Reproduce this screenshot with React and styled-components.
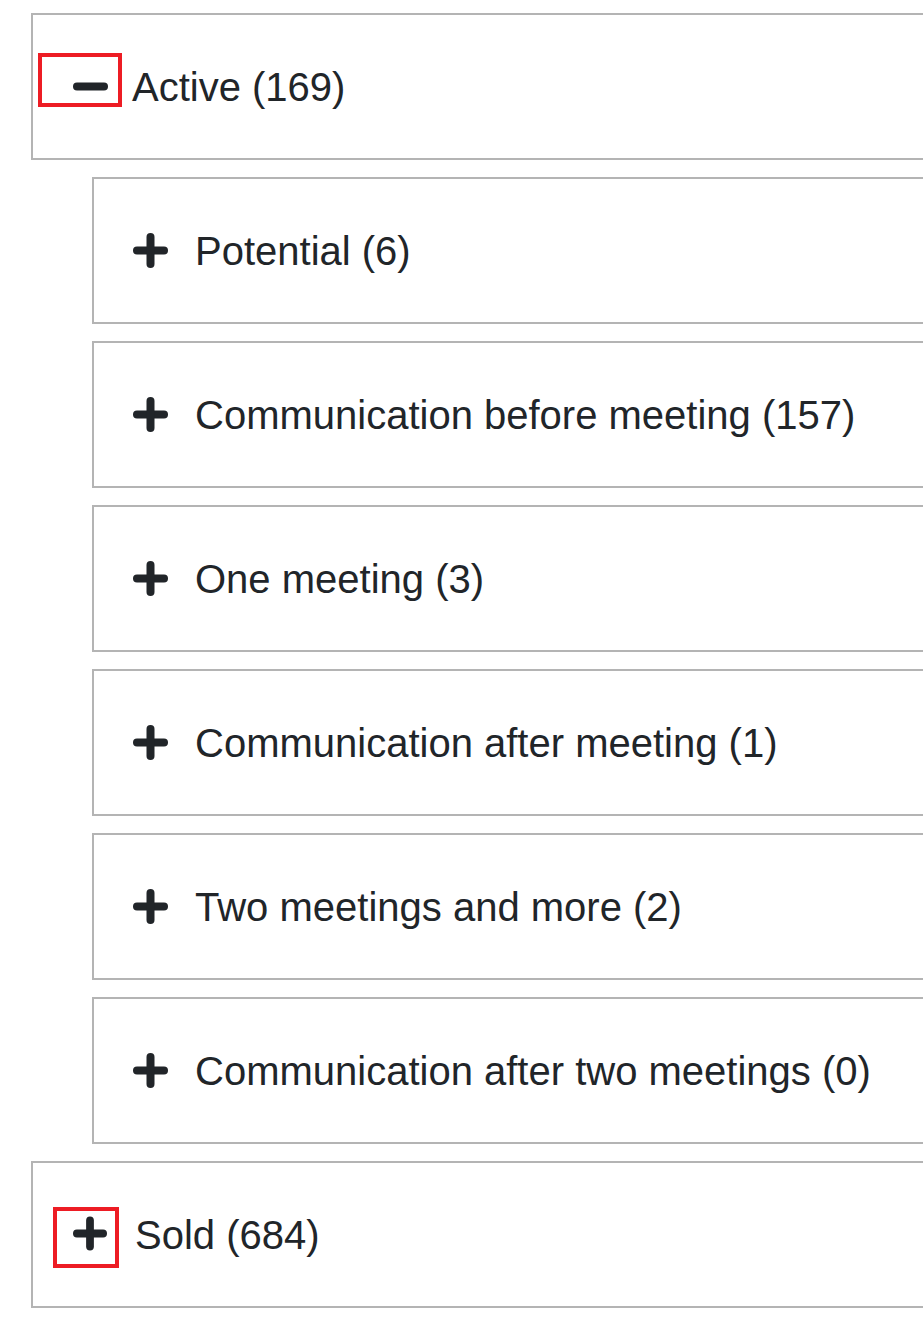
import React, { useState } from 'react';
import styled, { createGlobalStyle } from 'styled-components';

const GlobalStyle = createGlobalStyle`
  html, body {
    margin: 0;
    padding: 0;
    background: #ffffff;
    overflow: hidden;
    font-family: 'Liberation Sans', Arial, sans-serif;
    color: #212529;
  }
`;

const Page = styled.div`
  padding: 13px 0 0 31px;
  display: flex;
  flex-direction: column;
  gap: 17px;
  width: 1000px;
`;

const SubList = styled.div`
  display: flex;
  flex-direction: column;
  gap: 17px;
  margin-left: 61px;
`;

const Panel = styled.div`
  box-sizing: border-box;
  height: 147px;
  border: 2px solid #b4b4b4;
  background: #fff;
  display: flex;
  align-items: center;
  padding-left: ${p => p.$pad}px;
`;

const Toggle = styled.button`
  box-sizing: border-box;
  background: none;
  border: ${p => (p.$marked ? '4px solid #ed1c24' : 'none')};
  width: ${p => p.$w}px;
  height: ${p => p.$h}px;
  padding: ${p => p.$padding};
  margin: ${p => p.$margin || 0};
  display: flex;
  align-items: flex-start;
  justify-content: flex-start;
  cursor: pointer;
  flex-shrink: 0;
`;

const Label = styled.span`
  font-size: 40px;
  line-height: 1;
  margin-left: ${p => p.$ml}px;
  white-space: nowrap;
`;

const Icon = ({ open }) => (
  <svg width="35" height="35" viewBox="0 0 35 35" aria-hidden="true">
    <line x1="4" y1="17.5" x2="31" y2="17.5" stroke="#212529" strokeWidth="8" strokeLinecap="round" />
    {!open && (
      <line x1="17.5" y1="4" x2="17.5" y2="31" stroke="#212529" strokeWidth="8" strokeLinecap="round" />
    )}
  </svg>
);

const stages = [
  { name: 'Potential', count: 6 },
  { name: 'Communication before meeting', count: 157 },
  { name: 'One meeting', count: 3 },
  { name: 'Communication after meeting', count: 1 },
  { name: 'Two meetings and more', count: 2 },
  { name: 'Communication after two meetings', count: 0 },
];

export default function App() {
  const [activeOpen, setActiveOpen] = useState(true);
  const [soldOpen, setSoldOpen] = useState(false);

  return (
    <>
      <GlobalStyle />
      <Page>
        <Panel $pad={5}>
          <Toggle
            $marked
            $w={84}
            $h={54}
            $padding="12px 10px 0 31px"
            $margin="0 0 14px 0"
            onClick={() => setActiveOpen(!activeOpen)}
          >
            <Icon open={activeOpen} />
          </Toggle>
          <Label $ml={10}>Active (169)</Label>
        </Panel>

        {activeOpen && (
          <SubList>
            {stages.map(s => (
              <Panel key={s.name} $pad={39}>
                <Toggle $w={35} $h={35} $padding="0">
                  <Icon open={false} />
                </Toggle>
                <Label $ml={27}>
                  {s.name} ({s.count})
                </Label>
              </Panel>
            ))}
          </SubList>
        )}

        <Panel $pad={20}>
          <Toggle
            $marked
            $w={66}
            $h={61}
            $padding="5px 8px 0 16px"
            $margin="6px 0 0 0"
            onClick={() => setSoldOpen(!soldOpen)}
          >
            <Icon open={soldOpen} />
          </Toggle>
          <Label $ml={16}>Sold (684)</Label>
        </Panel>
      </Page>
    </>
  );
}
